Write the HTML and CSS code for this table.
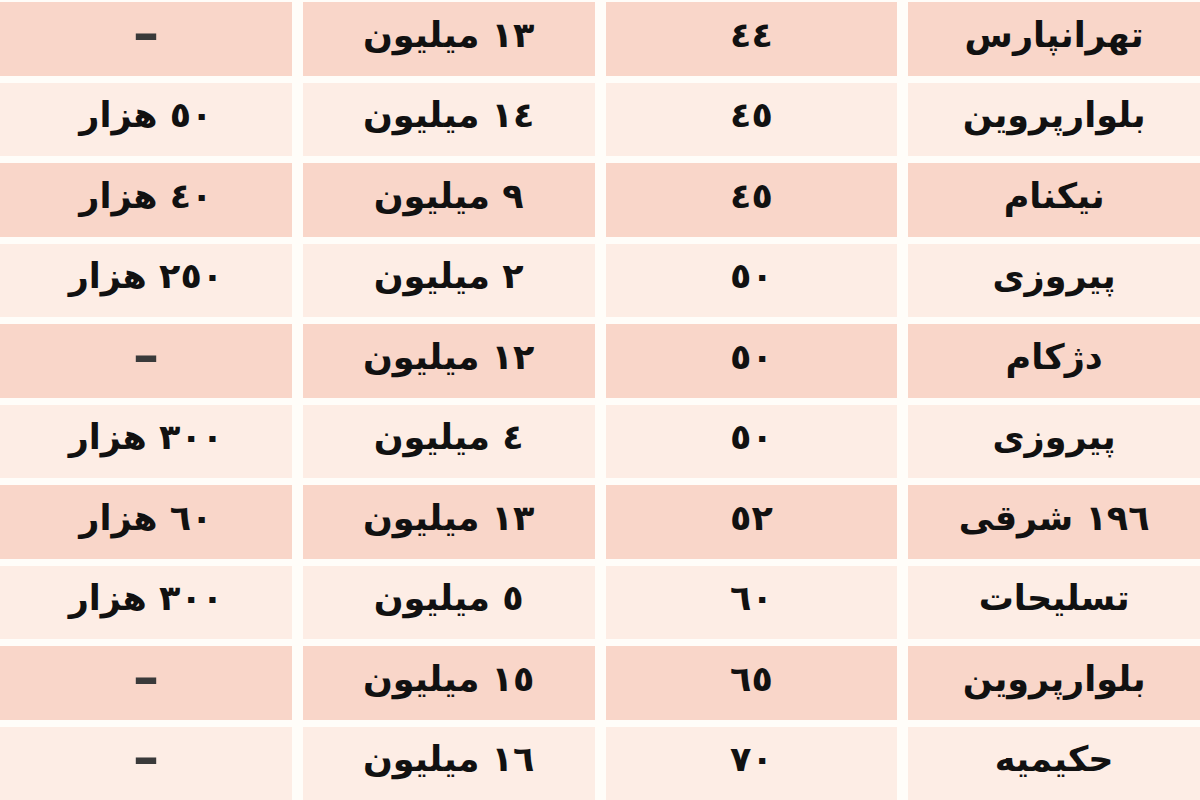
FILE: index.html
```html
<!DOCTYPE html>
<html lang="fa" dir="rtl">
<head>
<meta charset="utf-8">
<title>جدول</title>
<link rel="stylesheet" href="styles.css">
</head>
<body>
<div class="table">
  <div class="cell dark">تهرانپارس</div><div class="cell dark">٤٤</div><div class="cell dark">۱۳ میلیون</div><div class="cell dark dash">–</div>
  <div class="cell light">بلوارپروین</div><div class="cell light">٤٥</div><div class="cell light">۱٤ میلیون</div><div class="cell light">٥۰ هزار</div>
  <div class="cell dark">نیکنام</div><div class="cell dark">٤٥</div><div class="cell dark">۹ میلیون</div><div class="cell dark">٤۰ هزار</div>
  <div class="cell light">پیروزی</div><div class="cell light">٥۰</div><div class="cell light">۲ میلیون</div><div class="cell light">۲٥۰ هزار</div>
  <div class="cell dark">دژکام</div><div class="cell dark">٥۰</div><div class="cell dark">۱۲ میلیون</div><div class="cell dark dash">–</div>
  <div class="cell light">پیروزی</div><div class="cell light">٥۰</div><div class="cell light">٤ میلیون</div><div class="cell light">۳۰۰ هزار</div>
  <div class="cell dark">۱۹٦ شرقی</div><div class="cell dark">٥۲</div><div class="cell dark">۱۳ میلیون</div><div class="cell dark">٦۰ هزار</div>
  <div class="cell light">تسلیحات</div><div class="cell light">٦۰</div><div class="cell light">٥ میلیون</div><div class="cell light">۳۰۰ هزار</div>
  <div class="cell dark">بلوارپروین</div><div class="cell dark">٦٥</div><div class="cell dark">۱٥ میلیون</div><div class="cell dark dash">–</div>
  <div class="cell light">حکیمیه</div><div class="cell light">۷۰</div><div class="cell light">۱٦ میلیون</div><div class="cell light dash">–</div>
</div>
</body>
</html>
```

FILE: styles.css
```css
html, body {
  margin: 0;
  padding: 0;
  background: #fffdf9;
}
body {
  width: 1200px;
  height: 800px;
  overflow: hidden;
}
.table {
  box-sizing: border-box;
  width: 1200px;
  height: 800px;
  padding-top: 2px;
  display: grid;
  grid-template-columns: repeat(4, 1fr);
  grid-template-rows: repeat(10, 1fr);
  column-gap: 11px;
  row-gap: 7px;
  direction: rtl;
}
.cell {
  display: flex;
  align-items: center;
  justify-content: center;
  font-family: "DejaVu Sans", sans-serif;
  font-weight: bold;
  font-size: 35px;
  color: #111;
  padding-bottom: 8px;
  box-sizing: border-box;
}
.dark { background: #f9d6c9; }
.light { background: #fdede5; }
.dash { color: #3a3a3a; font-size: 52px; padding-bottom: 12px; }
```
